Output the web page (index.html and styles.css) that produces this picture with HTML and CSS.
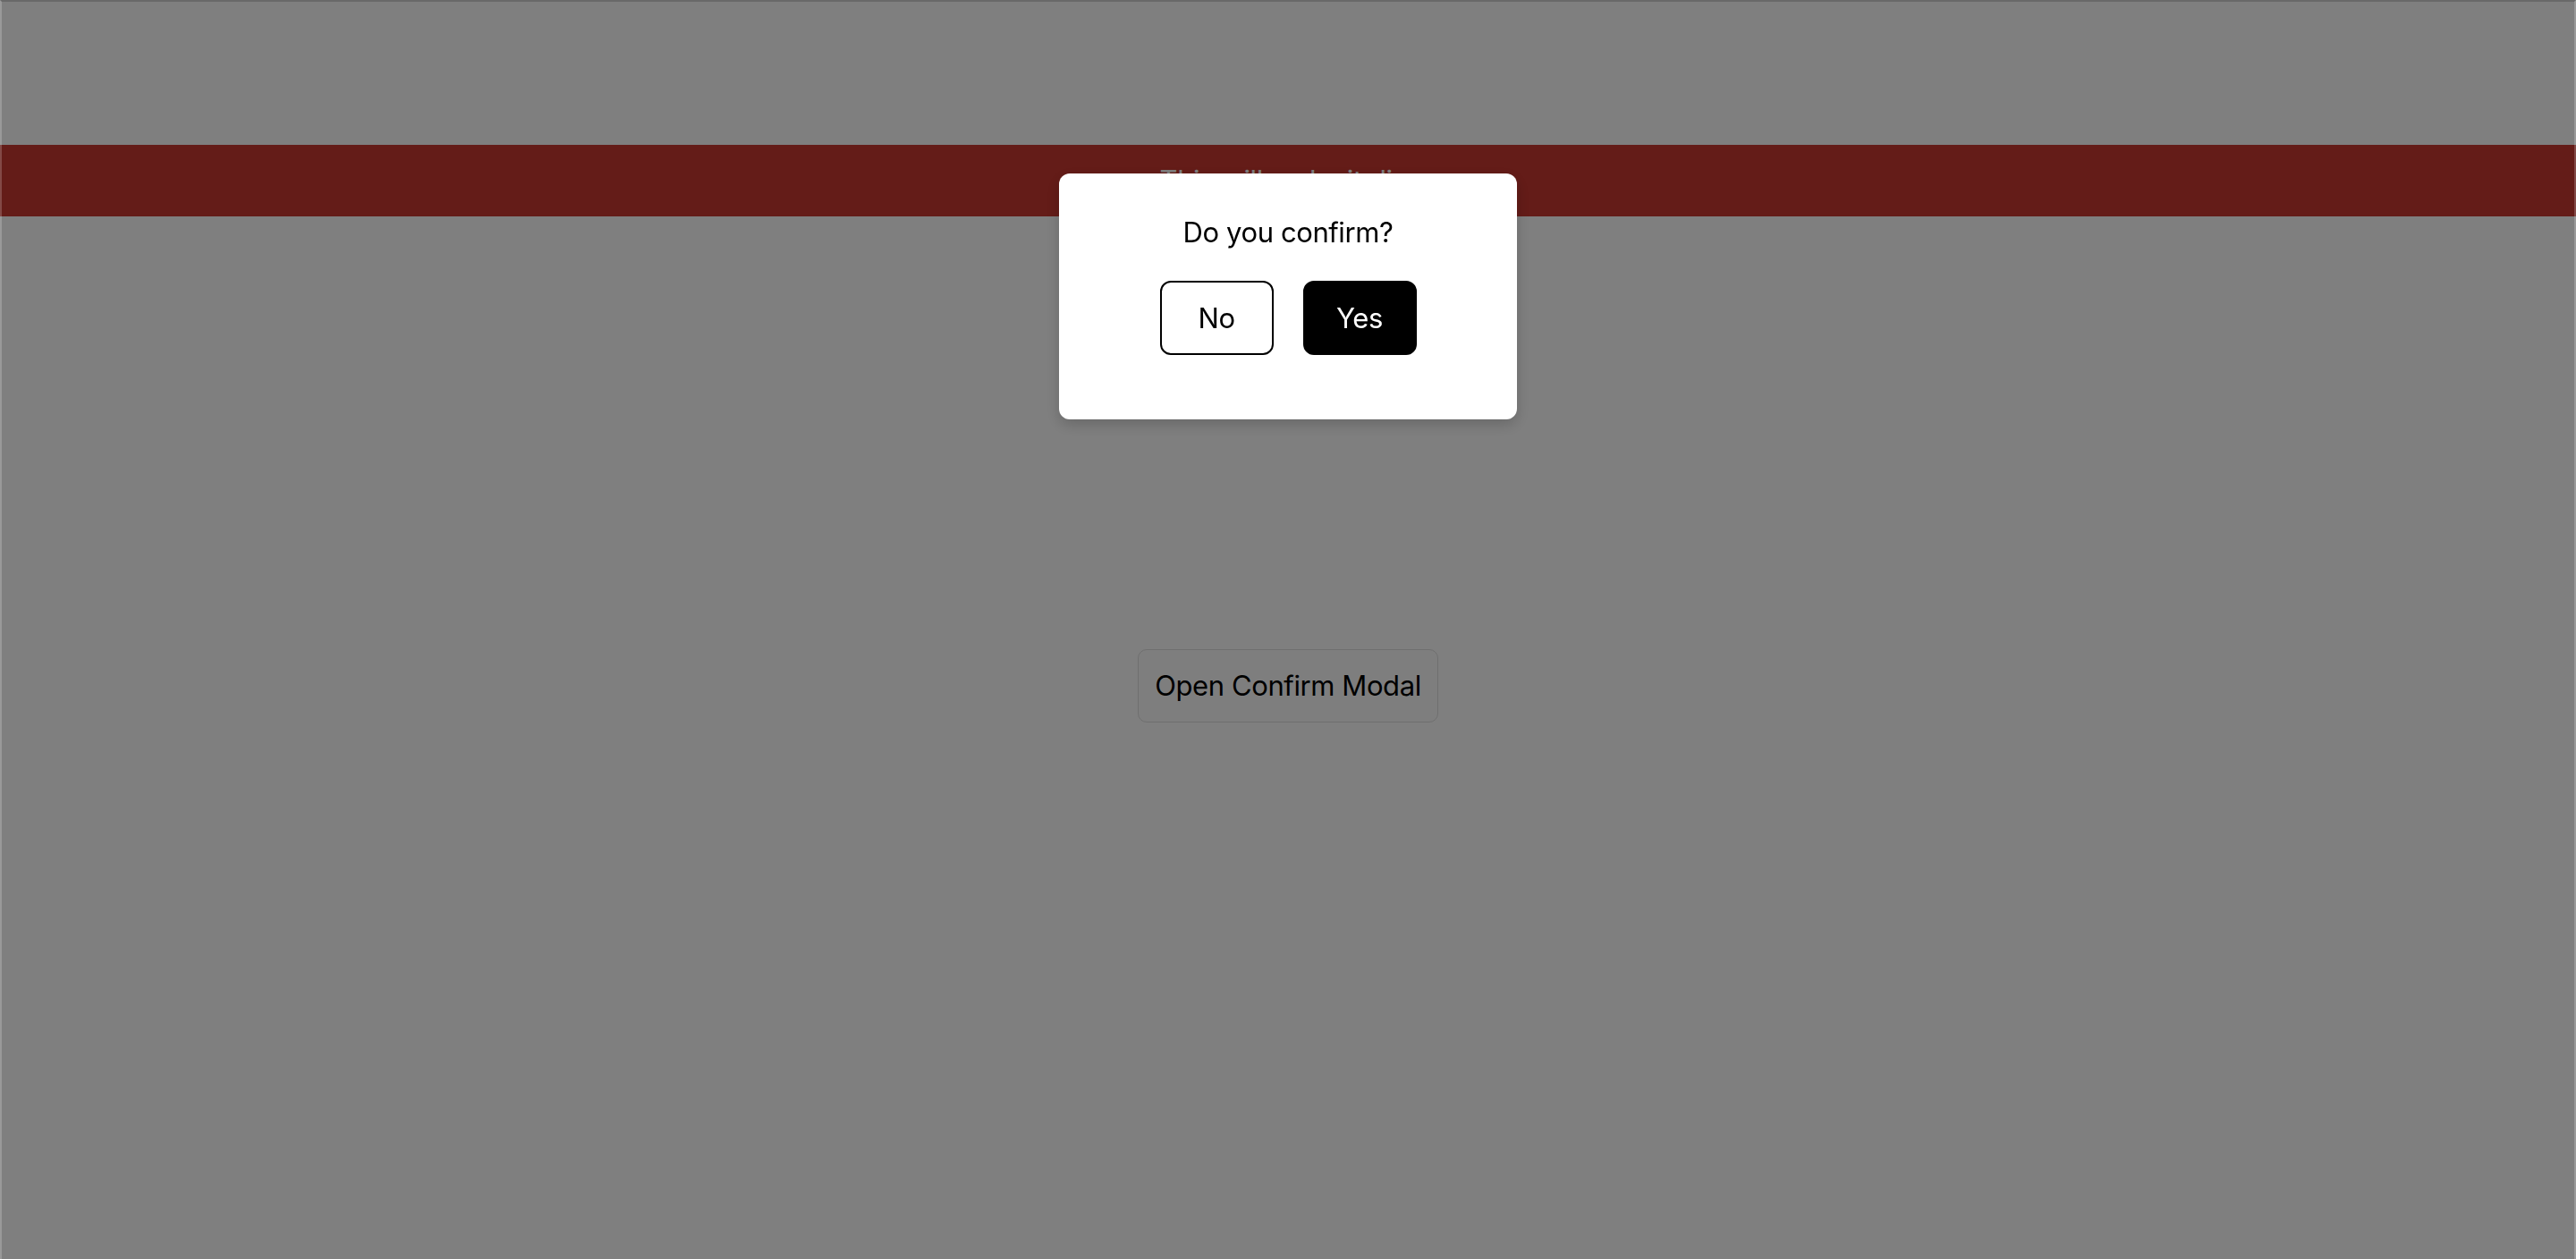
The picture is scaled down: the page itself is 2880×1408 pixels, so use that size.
FILE: index.html
```html
<!DOCTYPE html>
<html lang="en">
<head>
<meta charset="utf-8">
<title>Confirm Modal</title>
<link rel="stylesheet" href="styles.css">
</head>
<body>
  <div class="page">
    <div class="banner">This will make it dim</div>
    <main class="content">
      <button class="open-btn" type="button">Open Confirm Modal</button>
    </main>
  </div>

  <div class="overlay">
    <div class="modal" role="dialog" aria-modal="true">
      <p class="modal-title">Do you confirm?</p>
      <div class="modal-actions">
        <button class="btn btn-no" type="button">No</button>
        <button class="btn btn-yes" type="button">Yes</button>
      </div>
    </div>
  </div>
</body>
</html>
```

FILE: styles.css
```css
* {
  box-sizing: border-box;
}

html, body {
  margin: 0;
  padding: 0;
  height: 100%;
}

body {
  background: #ffffff;
  font-family: "Inter", "Liberation Sans", sans-serif;
  letter-spacing: -0.4px;
  color: #000;
  overflow: hidden;
}

.page {
  padding-top: 162px;
}

.banner {
  height: 80px;
  line-height: 80px;
  background: #c83830;
  color: #ffffff;
  font-size: 31px;
  text-align: center;
}

.content {
  display: flex;
  justify-content: center;
  padding-top: 484px;
}

.open-btn {
  font-family: inherit;
  letter-spacing: inherit;
  font-size: 31px;
  line-height: 38px;
  padding: 21px 18px;
  background: #fdfdfd;
  color: #000;
  border: 1px solid #dedede;
  border-radius: 10px;
  cursor: pointer;
}

.overlay {
  position: fixed;
  inset: 0;
  background: rgba(0, 0, 0, 0.5);
  border-top: 2px solid rgba(0, 0, 0, 0.17);
  border-left: 2px solid rgba(255, 255, 255, 0.2);
  border-right: 2px solid rgba(255, 255, 255, 0.2);
  display: flex;
  justify-content: center;
  align-items: flex-start;
  padding-top: 192px;
}

.modal {
  width: 512px;
  background: #ffffff;
  border-radius: 12px;
  box-shadow: 0 6px 16px rgba(0, 0, 0, 0.18);
  padding: 47px 0 72px;
  display: flex;
  flex-direction: column;
  align-items: center;
}

.modal-title {
  margin: 0;
  font-size: 31px;
  line-height: 38px;
  font-weight: 400;
}

.modal-actions {
  display: flex;
  gap: 33px;
  margin-top: 35px;
}

.btn {
  width: 127px;
  font-family: inherit;
  letter-spacing: inherit;
  font-size: 31px;
  line-height: 38px;
  padding: 21px 0 20px;
  border: 2px solid #000;
  border-radius: 12px;
  text-align: center;
  cursor: pointer;
}

.btn-no {
  background: #ffffff;
  color: #000;
}

.btn-yes {
  background: #000;
  color: #ffffff;
}
```
